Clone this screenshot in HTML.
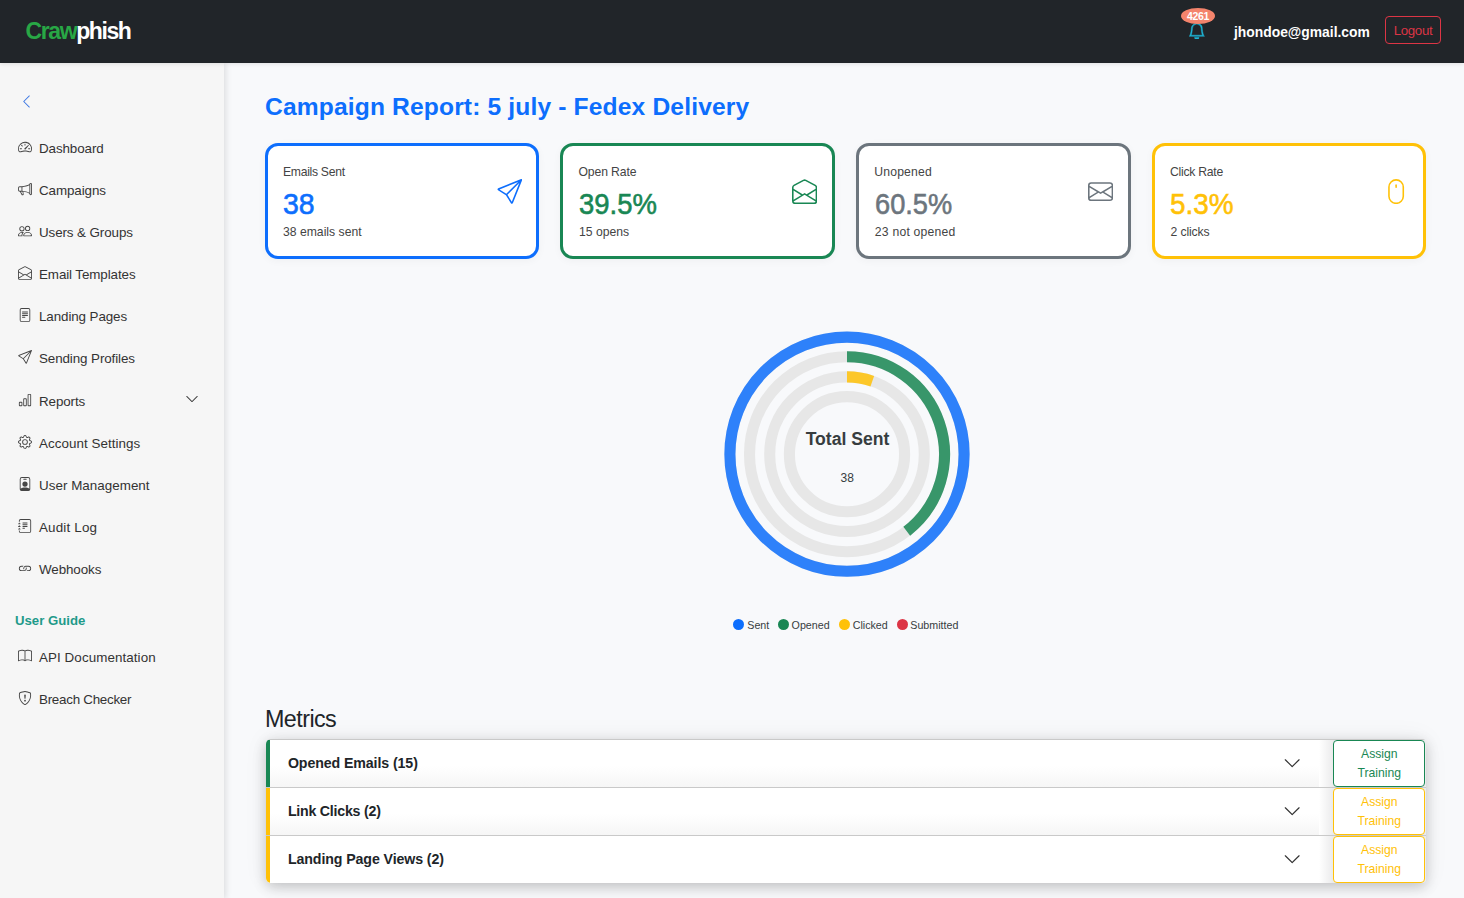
<!DOCTYPE html>
<html lang="en">
<head>
<meta charset="utf-8">
<title>Crawphish - Campaign Report</title>
<style>
*{box-sizing:border-box;margin:0;padding:0}
html,body{width:1464px;height:898px;overflow:hidden}
body{font-family:"Liberation Sans",sans-serif;background:#f8f9fb;color:#212529;position:relative}
svg{display:block}
.abs{position:absolute;white-space:nowrap}
/* navbar */
#nav{position:absolute;left:0;top:0;width:1464px;height:62.5px;background:#212529;z-index:5;box-shadow:0 1px 4px rgba(0,0,0,.10)}
#logo{left:25.5px;top:16.4px;font-size:23px;font-weight:700;line-height:30px;letter-spacing:-1.4px;color:#fff}
#logo b{color:#28a745}
#bell{left:1188.4px;top:21.8px;width:17.6px;height:17.6px;color:#1fb5d6;stroke:#1fb5d6;stroke-width:.45px}
#badge{left:1181px;top:8.4px;width:34px;height:16px;border-radius:50%;background:#f4846c;color:#fff;font-size:10.5px;font-weight:700;line-height:16px;text-align:center;letter-spacing:-.3px}
#email{left:1234px;top:20.5px;font-size:13.85px;font-weight:700;line-height:22px;color:#fff}
#logout{left:1385px;top:16px;width:56px;height:28px;border:1px solid #dc3545;border-radius:4px;color:#dc3545;font-size:13.3px;line-height:28px;text-align:center;letter-spacing:-.35px}
/* sidebar */
#side{position:absolute;left:0;top:62.5px;width:224px;height:836px;background:#f6f6f6;box-shadow:2px 0 6px rgba(0,0,0,.11);z-index:3}
.si{position:absolute;left:18px;height:20px;font-size:13.4px;line-height:20px;color:#333;white-space:nowrap;letter-spacing:-.1px}
.si svg{position:absolute;left:0;top:2.7px;width:14px;height:14px;fill:#454545}
.si span{position:absolute;left:21px;top:1.5px}
#guide{left:15px;top:610px;font-size:13.2px;font-weight:700;color:#1f9a8a;line-height:20px}
/* main */
#title{left:265px;top:90.4px;font-size:24.6px;font-weight:700;color:#0d6efd;line-height:34px;letter-spacing:.15px}
.card{position:absolute;top:143px;width:274px;height:116px;border:3px solid;border-radius:13px;background:#fff;box-shadow:0 2px 8px rgba(0,0,0,.04)}
.card .l{position:absolute;left:15px;top:18px;font-size:12.2px;line-height:16px;color:#444;white-space:nowrap}
.card .v{position:absolute;left:15px;transform-origin:0 50%;-webkit-text-stroke:.6px;top:40px;font-size:30px;line-height:36px;white-space:nowrap}
.card .s{position:absolute;left:15px;top:78px;font-size:12.2px;line-height:16px;color:#444;white-space:nowrap}
.card svg{position:absolute}
/* chart */
#chart{position:absolute;left:697px;top:304px;width:300px;height:300px}
.lg{position:absolute;top:618px;font-size:10.7px;line-height:14px;color:#373d3f;white-space:nowrap}
.dot{position:absolute;top:619px;width:11px;height:11px;border-radius:50%}
/* metrics */
#mh{left:265px;top:703.4px;font-size:23.3px;line-height:32px;color:#212529;letter-spacing:-.55px}
#mwrap{position:absolute;left:265.5px;top:739.2px;width:1160px;height:144px;box-shadow:0 4px 13px rgba(0,0,0,.2),0 0 26px rgba(0,0,0,.06);border-radius:5px 4px 4px 5px;overflow:hidden;background:#ececed}
.item{position:absolute;left:0;width:1160px;height:48px;border-top:1px solid #c9c9c9;background:linear-gradient(to right,#fff 1053px,#ebebec 1067px)}
.row{position:absolute;left:0;top:0;width:1053.2px;height:47px;background:linear-gradient(#fff 55%,#f6f6f6);border-left:4px solid}
.row span{position:absolute;left:18.4px;top:12.9px;font-size:14.2px;font-weight:700;line-height:20px;color:#212529;white-space:nowrap;letter-spacing:-.1px}
.row svg{position:absolute;left:1013.7px;top:13.4px;width:18.4px;height:18.4px;fill:#333}
.btn{position:absolute;left:1067.8px;top:-.3px;width:92px;height:46.8px;border:1px solid;border-radius:4px;background:#fff;font-size:12.2px;line-height:19px;text-align:center;padding-top:4px}
</style>
</head>
<body>
<div id="nav">
  <div id="logo" class="abs"><b>Craw</b>phish</div>
  <svg id="bell" class="abs" viewBox="0 0 16 16" fill="currentColor"><path d="M8 16a2 2 0 0 0 2-2H6a2 2 0 0 0 2 2zM8 1.918l-.797.161A4.002 4.002 0 0 0 4 6c0 .628-.134 2.197-.459 3.742-.16.767-.376 1.566-.663 2.258h10.244c-.287-.692-.502-1.490-.663-2.258C12.134 8.197 12 6.628 12 6a4.002 4.002 0 0 0-3.203-3.920L8 1.917zM14.220 12c.223.447.481.801.780 1H1c.299-.199.557-.553.780-1C2.680 10.200 3 6.880 3 6c0-2.420 1.720-4.440 4.005-4.901a1 1 0 1 1 1.990 0A5.002 5.002 0 0 1 13 6c0 .880.320 4.200 1.220 6z"/></svg>
  <div id="badge" class="abs">4261</div>
  <div id="email" class="abs">jhondoe@gmail.com</div>
  <div id="logout" class="abs">Logout</div>
</div>
<div id="side">
  <svg class="abs" style="left:19px;top:31px;width:15px;height:15px;fill:#3d78e3" viewBox="0 0 16 16"><path fill-rule="evenodd" d="M11.354 1.646a.5.5 0 0 1 0 .708L5.707 8l5.647 5.646a.5.5 0 0 1-.708.708l-6-6a.5.5 0 0 1 0-.708l6-6a.5.5 0 0 1 .708 0z"/></svg>
  <div class="si" style="top:75px"><svg viewBox="0 0 16 16"><path d="M8 4a.5.5 0 0 1 .5.5V6a.5.5 0 0 1-1 0V4.5A.5.5 0 0 1 8 4zM3.732 5.732a.5.5 0 0 1 .707 0l.915.914a.5.5 0 1 1-.708.708l-.914-.915a.5.5 0 0 1 0-.707zM2 10a.5.5 0 0 1 .5-.5h1.586a.5.5 0 0 1 0 1H2.5A.5.5 0 0 1 2 10zm9.500 0a.5.5 0 0 1 .5-.5h1.5a.5.5 0 0 1 0 1H12a.5.5 0 0 1-.5-.5zm.754-4.246a.389.389 0 0 0-.527-.02L7.547 9.31a.91.91 0 1 0 1.302 1.258l3.434-4.297a.389.389 0 0 0-.029-.518z"/><path fill-rule="evenodd" d="M0 10a8 8 0 1 1 15.547 2.661c-.442 1.253-1.845 1.602-2.932 1.25C11.309 13.488 9.475 13 8 13c-1.474 0-3.310.488-4.615.911-1.087.352-2.490.003-2.932-1.250A7.988 7.988 0 0 1 0 10zm8-7a7 7 0 0 0-6.603 9.329c.203.575.923.876 1.680.630C4.397 12.533 6.358 12 8 12s3.604.532 4.923.960c.757.245 1.477-.056 1.680-.630A7 7 0 0 0 8 3z"/></svg><span>Dashboard</span></div>
  <div class="si" style="top:117px"><svg viewBox="0 0 16 16"><path d="M13 2.5a1.5 1.5 0 0 1 3 0v11a1.5 1.5 0 0 1-3 0v-.214c-2.162-1.241-4.490-1.843-6.912-2.083l.405 2.712A1 1 0 0 1 5.510 15.100h-.548a1 1 0 0 1-.916-.599l-1.850-3.490a68.140 68.140 0 0 0-.202-.003A2.014 2.014 0 0 1 0 9V7a2.020 2.020 0 0 1 1.992-2.013 74.663 74.663 0 0 0 2.483-.075c3.043-.154 6.148-.849 8.525-2.199V2.500zm1 0v11a.5.5 0 0 0 1 0v-11a.5.5 0 0 0-1 0zm-1 1.350c-2.344 1.205-5.209 1.842-8 2.033v4.233c.18.010.359.022.537.036 2.568.189 5.093.744 7.463 1.993V3.850zm-9 6.215v-4.130a95.090 95.090 0 0 1-1.992.052A1.020 1.020 0 0 0 1 7v2c0 .550.448 1.002 1.006 1.009A60.490 60.490 0 0 1 4 10.065zm-.657.975 1.609 3.037.1.024h.548l-.002-.014-.443-2.966a68.019 68.019 0 0 0-1.722-.082z"/></svg><span>Campaigns</span></div>
  <div class="si" style="top:159px"><svg viewBox="0 0 16 16"><path d="M15 14s1 0 1-1-1-4-5-4-5 3-5 4 1 1 1 1h8zm-7.978-1A.261.261 0 0 1 7 12.996c.001-.264.167-1.030.760-1.720C8.312 10.629 9.282 10 11 10c1.717 0 2.687.630 3.240 1.276.593.690.758 1.457.760 1.720l-.8.002a.274.274 0 0 1-.14.002H7.022zM11 7a2 2 0 1 0 0-4 2 2 0 0 0 0 4zm3-2a3 3 0 1 1-6 0 3 3 0 0 1 6 0zM6.936 9.280a5.880 5.880 0 0 0-1.230-.247A7.350 7.350 0 0 0 5 9c-4 0-5 3-5 4 0 .667.333 1 1 1h4.216A2.238 2.238 0 0 1 5 13c0-1.010.377-2.042 1.090-2.904.243-.294.526-.569.846-.816zM4.920 10A5.493 5.493 0 0 0 4 13H1c0-.260.164-1.030.760-1.724.545-.636 1.492-1.256 3.160-1.275zM1.500 5.500a3 3 0 1 1 6 0 3 3 0 0 1-6 0zm3-2a2 2 0 1 0 0 4 2 2 0 0 0 0-4z"/></svg><span>Users &amp; Groups</span></div>
  <div class="si" style="top:201px"><svg viewBox="0 0 16 16"><path d="M8.470 1.318a1 1 0 0 0-.940 0l-6 3.200A1 1 0 0 0 1 5.400v.817l5.750 3.450L8 8.917l1.250.750L15 6.217V5.400a1 1 0 0 0-.530-.882l-6-3.200ZM15 7.383l-4.778 2.867L15 13.117V7.383Zm-.035 6.880L8 10.082l-6.965 4.180A1 1 0 0 0 2 15h12a1 1 0 0 0 .965-.738ZM1 13.116l4.778-2.867L1 7.383v5.734ZM7.059.435a2 2 0 0 1 1.882 0l6 3.200A2 2 0 0 1 16 5.400V14a2 2 0 0 1-2 2H2a2 2 0 0 1-2-2V5.400a2 2 0 0 1 1.059-1.765l6-3.200Z"/></svg><span>Email Templates</span></div>
  <div class="si" style="top:243px"><svg viewBox="0 0 16 16"><path d="M5 4a.5.5 0 0 0 0 1h6a.5.5 0 0 0 0-1H5zm-.5 2.500A.5.5 0 0 1 5 6h6a.5.5 0 0 1 0 1H5a.5.5 0 0 1-.5-.5zM5 8a.5.5 0 0 0 0 1h6a.5.5 0 0 0 0-1H5zm0 2a.5.5 0 0 0 0 1h3a.5.5 0 0 0 0-1H5z"/><path d="M2 2a2 2 0 0 1 2-2h8a2 2 0 0 1 2 2v12a2 2 0 0 1-2 2H4a2 2 0 0 1-2-2V2zm10-1H4a1 1 0 0 0-1 1v12a1 1 0 0 0 1 1h8a1 1 0 0 0 1-1V2a1 1 0 0 0-1-1z"/></svg><span>Landing Pages</span></div>
  <div class="si" style="top:285px"><svg viewBox="0 0 16 16"><path d="M15.854.146a.5.5 0 0 1 .110.540l-5.819 14.547a.750.750 0 0 1-1.329.124l-3.178-4.995L.643 7.184a.750.750 0 0 1 .124-1.330L15.314.037a.5.5 0 0 1 .540.110ZM6.636 10.070l2.761 4.338L14.130 2.576 6.636 10.070Zm6.787-8.201L1.591 6.602l4.339 2.760 7.494-7.493Z"/></svg><span>Sending Profiles</span></div>
  <div class="si" style="top:328px"><svg viewBox="0 0 16 16"><path d="M4 11H2v3h2v-3zm5-4H7v7h2V7zm5-5v12h-2V2h2zm-2-1a1 1 0 0 0-1 1v12a1 1 0 0 0 1 1h2a1 1 0 0 0 1-1V2a1 1 0 0 0-1-1h-2zM6 7a1 1 0 0 1 1-1h2a1 1 0 0 1 1 1v7a1 1 0 0 1-1 1H7a1 1 0 0 1-1-1V7zm-5 4a1 1 0 0 1 1-1h2a1 1 0 0 1 1 1v3a1 1 0 0 1-1 1H2a1 1 0 0 1-1-1v-3z"/></svg><span>Reports</span></div>
  <svg class="abs" style="left:185.2px;top:329.8px;width:14px;height:14px;fill:#3a3a3a" viewBox="0 0 16 16"><path fill-rule="evenodd" d="M1.646 4.646a.5.5 0 0 1 .708 0L8 10.293l5.646-5.647a.5.5 0 0 1 .708.708l-6 6a.5.5 0 0 1-.708 0l-6-6a.5.5 0 0 1 0-.708z"/></svg>
  <div class="si" style="top:370px"><svg viewBox="0 0 16 16"><path d="M8 4.754a3.246 3.246 0 1 0 0 6.492 3.246 3.246 0 0 0 0-6.492zM5.754 8a2.246 2.246 0 1 1 4.492 0 2.246 2.246 0 0 1-4.492 0z"/><path d="M9.796 1.343c-.527-1.790-3.065-1.790-3.592 0l-.094.319a.873.873 0 0 1-1.255.520l-.292-.160c-1.640-.892-3.433.902-2.540 2.541l.159.292a.873.873 0 0 1-.520 1.255l-.319.094c-1.790.527-1.790 3.065 0 3.592l.319.094a.873.873 0 0 1 .520 1.255l-.160.292c-.892 1.640.901 3.434 2.541 2.540l.292-.159a.873.873 0 0 1 1.255.520l.094.319c.527 1.790 3.065 1.790 3.592 0l.094-.319a.873.873 0 0 1 1.255-.520l.292.160c1.640.893 3.434-.902 2.540-2.541l-.159-.292a.873.873 0 0 1 .520-1.255l.319-.094c1.790-.527 1.790-3.065 0-3.592l-.319-.094a.873.873 0 0 1-.520-1.255l.160-.292c.893-1.640-.902-3.433-2.541-2.540l-.292.159a.873.873 0 0 1-1.255-.520l-.094-.319zm-2.633.283c.246-.835 1.428-.835 1.674 0l.094.319a1.873 1.873 0 0 0 2.693 1.115l.291-.160c.764-.415 1.600.420 1.184 1.185l-.159.292a1.873 1.873 0 0 0 1.116 2.692l.318.094c.835.246.835 1.428 0 1.674l-.319.094a1.873 1.873 0 0 0-1.115 2.693l.160.291c.415.764-.420 1.600-1.185 1.184l-.291-.159a1.873 1.873 0 0 0-2.693 1.116l-.094.318c-.246.835-1.428.835-1.674 0l-.094-.319a1.873 1.873 0 0 0-2.692-1.115l-.292.160c-.764.415-1.600-.420-1.184-1.185l.159-.291A1.873 1.873 0 0 0 1.945 8.930l-.319-.094c-.835-.246-.835-1.428 0-1.674l.319-.094A1.873 1.873 0 0 0 3.060 4.377l-.160-.292c-.415-.764.420-1.600 1.185-1.184l.292.159a1.873 1.873 0 0 0 2.692-1.115l.094-.319z"/></svg><span style="letter-spacing:0.05px">Account Settings</span></div>
  <div class="si" style="top:412px"><svg viewBox="0 0 16 16"><path d="M6.5 2a.5.5 0 0 0 0 1h3a.5.5 0 0 0 0-1h-3zM11 8a3 3 0 1 1-6 0 3 3 0 0 1 6 0z"/><path d="M4.5 0A2.5 2.5 0 0 0 2 2.500V14a2 2 0 0 0 2 2h8a2 2 0 0 0 2-2V2.500A2.500 2.500 0 0 0 11.500 0h-7zM3 2.500A1.500 1.500 0 0 1 4.500 1h7A1.500 1.500 0 0 1 13 2.500v10.795a4.200 4.200 0 0 0-.776-.492C11.392 12.387 10.063 12 8 12s-3.392.387-4.224.803a4.200 4.200 0 0 0-.776.492V2.500z"/></svg><span style="letter-spacing:0.03px">User Management</span></div>
  <div class="si" style="top:454px"><svg viewBox="0 0 16 16"><path d="M5 10.500a.5.5 0 0 1 .5-.5h2a.5.5 0 0 1 0 1h-2a.5.5 0 0 1-.5-.5zm0-2a.5.5 0 0 1 .5-.5h5a.5.5 0 0 1 0 1h-5a.5.5 0 0 1-.5-.5zm0-2a.5.5 0 0 1 .5-.5h5a.5.5 0 0 1 0 1h-5a.5.5 0 0 1-.5-.5zm0-2a.5.5 0 0 1 .5-.5h5a.5.5 0 0 1 0 1h-5a.5.5 0 0 1-.5-.5z"/><path d="M3 0h10a2 2 0 0 1 2 2v12a2 2 0 0 1-2 2H3a2 2 0 0 1-2-2v-1h1v1a1 1 0 0 0 1 1h10a1 1 0 0 0 1-1V2a1 1 0 0 0-1-1H3a1 1 0 0 0-1 1v1H1V2a2 2 0 0 1 2-2z"/><path d="M1 5v-.5a.5.5 0 0 1 1 0V5h.5a.5.5 0 0 1 0 1h-2a.5.5 0 0 1 0-1H1zm0 3v-.5a.5.5 0 0 1 1 0V8h.5a.5.5 0 0 1 0 1h-2a.5.5 0 0 1 0-1H1zm0 3v-.5a.5.5 0 0 1 1 0v.5h.5a.5.5 0 0 1 0 1h-2a.5.5 0 0 1 0-1H1z"/></svg><span style="letter-spacing:0.17px">Audit Log</span></div>
  <div class="si" style="top:496px"><svg viewBox="0 0 16 16"><path d="M6.354 5.500H4a3 3 0 0 0 0 6h3a3 3 0 0 0 2.830-4H9c-.086 0-.170.010-.250.031A2 2 0 0 1 7 10.500H4a2 2 0 1 1 0-4h1.535c.218-.376.495-.714.820-1z"/><path d="M9 5.500a3 3 0 0 0-2.830 4h1.098A2 2 0 0 1 9 6.500h3a2 2 0 1 1 0 4h-1.535a4.020 4.020 0 0 1-.820 1H12a3 3 0 1 0 0-6H9z"/></svg><span>Webhooks</span></div>
  <div id="guide" class="abs" style="top:548px">User Guide</div>
  <div class="si" style="top:584px"><svg viewBox="0 0 16 16"><path d="M1 2.828c.885-.370 2.154-.769 3.388-.893 1.330-.134 2.458.063 3.112.752v9.746c-.935-.530-2.120-.603-3.213-.493-1.180.120-2.370.461-3.287.811V2.828zm7.500-.141c.654-.689 1.782-.886 3.112-.752 1.234.124 2.503.523 3.388.893v9.923c-.918-.350-2.107-.692-3.287-.810-1.094-.111-2.278-.039-3.213.492V2.687zM8 1.783C7.015.936 5.587.810 4.287.940c-1.514.153-3.042.672-3.994 1.105A.5.5 0 0 0 0 2.500v11a.5.5 0 0 0 .707.455c.882-.400 2.303-.881 3.680-1.020 1.409-.142 2.590.087 3.223.877a.5.5 0 0 0 .780 0c.633-.790 1.814-1.019 3.222-.877 1.378.139 2.800.620 3.681 1.020A.5.5 0 0 0 16 13.500v-11a.5.5 0 0 0-.293-.455c-.952-.433-2.480-.952-3.994-1.105C10.413.809 8.985.936 8 1.783z"/></svg><span style="letter-spacing:0.08px">API Documentation</span></div>
  <div class="si" style="top:626px"><svg viewBox="0 0 16 16"><path d="M5.338 1.590a61.440 61.440 0 0 0-2.837.856.481.481 0 0 0-.328.390c-.554 4.157.726 7.190 2.253 9.188a10.725 10.725 0 0 0 2.287 2.233c.346.244.652.420.893.533.120.057.218.095.293.118a.550.550 0 0 0 .101.025.615.615 0 0 0 .100-.025c.076-.023.174-.061.294-.118.240-.113.547-.290.893-.533a10.726 10.726 0 0 0 2.287-2.233c1.527-1.997 2.807-5.031 2.253-9.188a.480.480 0 0 0-.328-.390c-.651-.213-1.750-.560-2.837-.855C9.552 1.290 8.531 1.067 8 1.067c-.530 0-1.552.223-2.662.524zM5.072.560C6.157.265 7.310 0 8 0s1.843.265 2.928.560c1.110.300 2.229.655 2.887.870a1.540 1.540 0 0 1 1.044 1.262c.596 4.477-.787 7.795-2.465 9.990a11.775 11.775 0 0 1-2.517 2.453 7.159 7.159 0 0 1-1.048.625c-.280.132-.581.240-.829.240s-.548-.108-.829-.240a7.158 7.158 0 0 1-1.048-.625 11.777 11.777 0 0 1-2.517-2.453C1.928 10.487.545 7.169 1.141 2.692A1.540 1.540 0 0 1 2.185 1.430 62.456 62.456 0 0 1 5.072.560z"/><path d="M7.001 11a1 1 0 1 1 2 0 1 1 0 0 1-2 0zM7.100 4.995a.905.905 0 1 1 1.800 0l-.350 3.507a.553.553 0 0 1-1.100 0L7.100 4.995z"/></svg><span style="letter-spacing:-0.27px">Breach Checker</span></div>
</div>
<div id="title" class="abs">Campaign Report: 5 july - Fedex Delivery</div>
<div class="card" style="left:265px;border-color:#0d6efd"><div class="l" style="letter-spacing:-0.3px">Emails Sent</div><div class="v" style="color:#0d6efd;transform:scaleX(0.948)">38</div><div class="s">38 emails sent</div><svg style="left:228.6px;top:32.6px;width:25.2px;height:25.2px;color:#0d6efd" viewBox="0 0 16 16" fill="currentColor"><path d="M15.854.146a.5.5 0 0 1 .110.540l-5.819 14.547a.750.750 0 0 1-1.329.124l-3.178-4.995L.643 7.184a.750.750 0 0 1 .124-1.330L15.314.037a.5.5 0 0 1 .540.110ZM6.636 10.070l2.761 4.338L14.130 2.576 6.636 10.070Zm6.787-8.201L1.591 6.602l4.339 2.760 7.494-7.493Z"/></svg></div>
<div class="card" style="left:560.4px;width:274.5px;border-color:#198754"><div class="l" style="letter-spacing:-0.1px">Open Rate</div><div class="v" style="color:#198754;left:15.4px;transform:scaleX(0.916)">39.5%</div><div class="s" style="letter-spacing:0px;left:15.6px">15 opens</div><svg style="left:228.6px;top:32.6px;width:25.2px;height:25.2px;color:#198754" viewBox="0 0 16 16" fill="currentColor"><path d="M8.470 1.318a1 1 0 0 0-.940 0l-6 3.200A1 1 0 0 0 1 5.400v.817l5.750 3.450L8 8.917l1.250.750L15 6.217V5.400a1 1 0 0 0-.530-.882l-6-3.200ZM15 7.383l-4.778 2.867L15 13.117V7.383Zm-.035 6.880L8 10.082l-6.965 4.180A1 1 0 0 0 2 15h12a1 1 0 0 0 .965-.738ZM1 13.116l4.778-2.867L1 7.383v5.734ZM7.059.435a2 2 0 0 1 1.882 0l6 3.200A2 2 0 0 1 16 5.400V14a2 2 0 0 1-2 2H2a2 2 0 0 1-2-2V5.400a2 2 0 0 1 1.059-1.765l6-3.200Z"/></svg></div>
<div class="card" style="left:856.2px;width:274.6px;border-color:#6c757d"><div class="l" style="letter-spacing:0.2px">Unopened</div><div class="v" style="color:#6c757d;left:15.4px;transform:scaleX(0.907)">60.5%</div><div class="s" style="letter-spacing:0.22px;left:15.6px">23 not opened</div><svg style="left:228.6px;top:32.6px;width:25.2px;height:25.2px;color:#6c757d" viewBox="0 0 16 16" fill="currentColor"><path d="M0 4a2 2 0 0 1 2-2h12a2 2 0 0 1 2 2v8a2 2 0 0 1-2 2H2a2 2 0 0 1-2-2V4Zm2-1a1 1 0 0 0-1 1v.217l7 4.200 7-4.200V4a1 1 0 0 0-1-1H2Zm13 2.383-4.708 2.825L15 11.105V5.383Zm-.034 6.876-5.640-3.471L8 9.583l-1.326-.795-5.640 3.470A1 1 0 0 0 2 13h12a1 1 0 0 0 .966-.741ZM1 11.105l4.708-2.897L1 5.383v5.722Z"/></svg></div>
<div class="card" style="left:1152px;border-color:#ffc107"><div class="l" style="letter-spacing:-0.25px">Click Rate</div><div class="v" style="color:#ffc107;left:15.4px;transform:scaleX(0.930)">5.3%</div><div class="s" style="letter-spacing:-0.15px;left:15.6px">2 clicks</div><svg style="left:228.6px;top:32.6px;width:25.2px;height:25.2px;color:#ffc107" viewBox="0 0 16 16" fill="currentColor"><rect x="3.15" y=".55" width="9.1" height="14.9" rx="4.55" fill="none" stroke="currentColor" stroke-width="1"/><path d="M7.7 3.9v1.3" stroke="currentColor" stroke-width="1" stroke-linecap="round" fill="none"/></svg></div>
<svg id="chart" viewBox="0 0 300 300" fill="none" stroke-width="11.1">
<circle cx="150" cy="150.2" r="117.1" stroke="#e7e7e7"/>
<circle cx="150" cy="150.2" r="97.5" stroke="#e7e7e7"/>
<circle cx="150" cy="150.2" r="77.3" stroke="#e7e7e7"/>
<circle cx="150" cy="150.2" r="57.6" stroke="#e7e7e7"/>
<circle cx="150" cy="150.2" r="117.1" stroke="#0d6efd" stroke-opacity=".85"/>
<path d="M150 52.70A97.5 97.5 0 0 1 209.76 227.24" stroke="#198754" stroke-opacity=".85"/>
<path d="M150 72.90A77.3 77.3 0 0 1 175.29 77.16" stroke="#ffc107" stroke-opacity=".85"/>
<text x="150.5" y="141.2" text-anchor="middle" font-family="Liberation Sans, sans-serif" font-size="17.6" font-weight="700" fill="#373d3f" stroke="none">Total Sent</text>
<text x="150.3" y="178.3" text-anchor="middle" font-family="Liberation Sans, sans-serif" font-size="12" fill="#373d3f" stroke="none">38</text>
</svg>
<div class="dot" style="left:733px;background:#0d6efd"></div><div class="lg" style="left:747.3px">Sent</div>
<div class="dot" style="left:778px;background:#198754"></div><div class="lg" style="left:791.6px">Opened</div>
<div class="dot" style="left:839px;background:#ffc107"></div><div class="lg" style="left:852.7px">Clicked</div>
<div class="dot" style="left:896.5px;background:#dc3545"></div><div class="lg" style="left:910.3px">Submitted</div>
<div id="mh" class="abs">Metrics</div>
<div id="mwrap">
<div class="item" style="top:0.00px"><div class="row" style="border-left-color:#198754"><span>Opened Emails (15)</span><svg viewBox="0 0 16 16"><path fill-rule="evenodd" d="M1.646 4.646a.5.5 0 0 1 .708 0L8 10.293l5.646-5.647a.5.5 0 0 1 .708.708l-6 6a.5.5 0 0 1-.708 0l-6-6a.5.5 0 0 1 0-.708z"/></svg></div><div class="btn" style="border-color:#198754;color:#198754">Assign<br>Training</div></div>
<div class="item" style="top:48px"><div class="row" style="border-left-color:#ffc107"><span style="letter-spacing:-.23px">Link Clicks (2)</span><svg viewBox="0 0 16 16"><path fill-rule="evenodd" d="M1.646 4.646a.5.5 0 0 1 .708 0L8 10.293l5.646-5.647a.5.5 0 0 1 .708.708l-6 6a.5.5 0 0 1-.708 0l-6-6a.5.5 0 0 1 0-.708z"/></svg></div><div class="btn" style="border-color:#ffc107;color:#ffc107">Assign<br>Training</div></div>
<div class="item" style="top:96px"><div class="row" style="border-left-color:#ffc107;background:#fff"><span>Landing Page Views (2)</span><svg viewBox="0 0 16 16"><path fill-rule="evenodd" d="M1.646 4.646a.5.5 0 0 1 .708 0L8 10.293l5.646-5.647a.5.5 0 0 1 .708.708l-6 6a.5.5 0 0 1-.708 0l-6-6a.5.5 0 0 1 0-.708z"/></svg></div><div class="btn" style="border-color:#ffc107;color:#ffc107">Assign<br>Training</div></div>
</div>
</body>
</html>
